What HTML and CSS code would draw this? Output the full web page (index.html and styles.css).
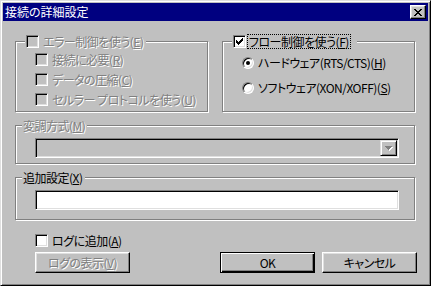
FILE: index.html
```html
<!DOCTYPE html>
<html lang="ja">
<head>
  <meta charset="UTF-8">
  <title>接続の詳細設定</title>
  <link rel="stylesheet" href="styles.css">
</head>
<body>
  <div class="window">
    <div class="titlebar">
      <span class="title">接続の詳細設定</span>
      <span class="close-btn">
        <svg width="8" height="7" viewBox="0 0 8 7" shape-rendering="crispEdges"><path d="M0 0h2v1H0z M6 0h2v1H6z M1 1h2v1H1z M5 1h2v1H5z M2 2h4v1H2z M3 3h2v1H3z M2 4h4v1H2z M1 5h2v1H1z M5 5h2v1H5z M0 6h2v1H0z M6 6h2v1H6z" fill="#000"/></svg>
      </span>
    </div>

    <div class="client">
      <div class="top-row">
        <fieldset class="group disabled">
          <legend class="legend-check">
            <span class="checkbox"></span>
            <span class="label">エラー制御を使う(<u>E</u>)</span>
          </legend>
          <div class="options">
            <div class="option"><span class="checkbox"></span><span class="label">接続に必要(<u>R</u>)</span></div>
            <div class="option"><span class="checkbox"></span><span class="label">データの圧縮(<u>C</u>)</span></div>
            <div class="option"><span class="checkbox"></span><span class="label">セルラー プロトコルを使う(<u>U</u>)</span></div>
          </div>
        </fieldset>

        <fieldset class="group">
          <legend class="legend-check legend-flow">
            <span class="checkbox">
              <svg width="7" height="7" viewBox="0 0 7 7" shape-rendering="crispEdges"><path d="M6 0h1v1H6z M5 1h2v1H5z M0 2h1v1H0z M4 2h3v1H4z M0 3h2v1H0z M3 3h3v1H3z M0 4h5v1H0z M1 5h3v1H1z M2 6h1v1H2z" fill="#000"/></svg>
            </span>
            <span class="label focus">フロー制御を使う(<u>F</u>)</span>
          </legend>
          <div class="options radios">
            <div class="option"><span class="radio selected"></span><span class="label">ハードウェア(RTS/CTS)(<u>H</u>)</span></div>
            <div class="option"><span class="radio"></span><span class="label">ソフトウェア(XON/XOFF)(<u>S</u>)</span></div>
          </div>
        </fieldset>
      </div>

      <fieldset class="group wide disabled modulation">
        <legend class="legend-text"><span class="label">変調方式(<u>M</u>)</span></legend>
        <div class="combo">
          <span class="combo-btn">
            <svg width="8" height="5" viewBox="0 0 8 5" shape-rendering="crispEdges">
              <path d="M1 1h7v1H1z M2 2h5v1H2z M3 3h3v1H3z M4 4h1v1H4z" fill="#fff"/>
              <path d="M0 0h7v1H0z M1 1h5v1H1z M2 2h3v1H2z M3 3h1v1H3z" fill="#808080"/>
            </svg>
          </span>
        </div>
      </fieldset>

      <fieldset class="group wide extra">
        <legend class="legend-text"><span class="label">追加設定(<u>X</u>)</span></legend>
        <div class="textbox"></div>
      </fieldset>

      <div class="footer">
        <div class="option log-option"><span class="checkbox"></span><span class="label">ログに追加(<u>A</u>)</span></div>
        <div class="button-row">
          <button class="btn disabled"><span class="label">ログの表示(<u>V</u>)</span></button>
          <button class="btn default ok">OK</button>
          <button class="btn">キャンセル</button>
        </div>
      </div>
    </div>
  </div>
</body>
</html>
```

FILE: styles.css
```css
* {
  box-sizing: border-box;
}

body {
  margin: 0;
  background-color: #c0c0c0;
  font-family: "Noto Sans CJK JP", "Noto Sans", sans-serif;
  font-size: 12px;
  line-height: 12px;
  font-feature-settings: "palt";
  color: #000;
}

u {
  text-decoration-thickness: 1px;
  text-underline-offset: 1px;
}

/* window frame */
.window {
  width: 431px;
  height: 286px;
  padding: 2px;
  border: 1px solid;
  border-color: #dfdfdf #000 #000 #dfdfdf;
  box-shadow: inset 1px 1px #fff, inset -1px -1px #808080;
  background-color: #c0c0c0;
}

.titlebar {
  height: 18px;
  display: flex;
  align-items: center;
  justify-content: space-between;
  padding: 0 2px 0 2px;
  background-color: #000080;
  color: #fff;
}

.close-btn {
  width: 16px;
  height: 14px;
  display: grid;
  place-items: center;
  background-color: #c0c0c0;
  border: 1px solid;
  border-color: #fff #000 #000 #fff;
  box-shadow: inset -1px -1px #808080, inset 1px 1px #dfdfdf;
}

.close-btn svg {
  display: block;
}

.client {
  padding: 14px 13px 0 12px;
}

/* group boxes */
.top-row {
  display: flex;
  gap: 14px;
}

.group {
  margin: 0;
  padding: 0;
  min-inline-size: 0;
  border: 1px solid #808080;
  box-shadow: inset 1px 1px #fff, 1px 1px #fff;
}

.top-row .group {
  flex: 1;
}

.group legend {
  padding: 0;
  background-color: #c0c0c0;
}

.legend-check {
  display: flex;
  align-items: center;
  height: 13px;
  margin: 0 0 -2px 9px;
  padding: 0 3px 0 1px !important;
  gap: 4px;
}

.legend-flow {
  gap: 2px;
  padding-right: 7px !important;
}

.legend-text {
  height: 11px;
  line-height: 11px;
  margin-left: 6px;
  padding: 0 2px 0 1px !important;
}

.options {
  display: flex;
  flex-direction: column;
  gap: 7px;
  padding: 7px 0 5px 19px;
}

.radios {
  gap: 13px;
  padding-top: 11px;
}

.option {
  display: flex;
  align-items: center;
  height: 13px;
  gap: 4px;
  white-space: nowrap;
}

.radios .option {
  height: 12px;
}

.label,
.btn {
  letter-spacing: -0.5px;
}

/* controls */
.checkbox {
  width: 13px;
  height: 13px;
  flex: none;
  display: grid;
  place-items: center;
  border: 1px solid;
  border-color: #808080 #fff #fff #808080;
  box-shadow: inset 1px 1px #000, inset -1px -1px #dfdfdf;
  background-color: #fff;
}

.checkbox svg {
  display: block;
}

.disabled .checkbox {
  background-color: #c0c0c0;
}

.radio {
  width: 12px;
  height: 12px;
  flex: none;
  display: grid;
  place-items: center;
  border-radius: 50%;
  border: 1px solid;
  border-color: #808080 #fff #fff #808080;
  box-shadow: inset 1px 1px #000, inset -1px -1px #dfdfdf;
  background-color: #fff;
}

.radio.selected::after {
  content: "";
  width: 4px;
  height: 4px;
  border-radius: 50%;
  background-color: #000;
}

.label.focus {
  outline: 1px dotted #000;
  outline-offset: 0;
  padding: 1px 1px 0 1px;
}

.disabled .label {
  color: #808080;
  text-shadow: 1px 1px #fff;
}

.combo,
.textbox {
  width: 364px;
  height: 20px;
  margin-left: 19px;
  border: 1px solid;
  border-color: #808080 #fff #fff #808080;
  box-shadow: inset 1px 1px #000, inset -1px -1px #dfdfdf;
}

.modulation .combo {
  margin-top: 7px;
  margin-bottom: 5px;
  display: flex;
  justify-content: flex-end;
  padding: 1px;
  background-color: #c0c0c0;
}

.combo-btn {
  width: 17px;
  height: 16px;
  display: grid;
  place-items: center;
  border: 1px solid;
  border-color: #dfdfdf #000 #000 #dfdfdf;
  box-shadow: inset 1px 1px #fff, inset -1px -1px #808080;
  background-color: #c0c0c0;
}

.combo-btn svg {
  display: block;
  margin: 1px 0 0 1px;
}

.modulation {
  margin-top: 8px;
}

.extra {
  margin-top: 8px;
}

.extra .textbox {
  margin-top: 7px;
  margin-bottom: 9px;
  background-color: #fff;
}

/* footer */
.footer {
  padding-left: 20px;
  margin-top: 14px;
}

.button-row {
  display: flex;
  margin-top: 5px;
  margin-right: -2px;
}

.btn {
  width: 95px;
  height: 21px;
  padding: 0;
  display: flex;
  align-items: center;
  justify-content: center;
  font: inherit;
  color: #000;
  background-color: #c0c0c0;
  border: 1px solid;
  border-color: #fff #000 #000 #fff;
  box-shadow: inset -1px -1px #808080, inset 1px 1px #dfdfdf;
}

.btn.default {
  border-color: #000;
  box-shadow: inset 1px 1px #fff, inset -1px -1px #000, inset -2px -2px #808080;
}

.btn.ok {
  margin-left: auto;
  margin-right: 7px;
}
```
